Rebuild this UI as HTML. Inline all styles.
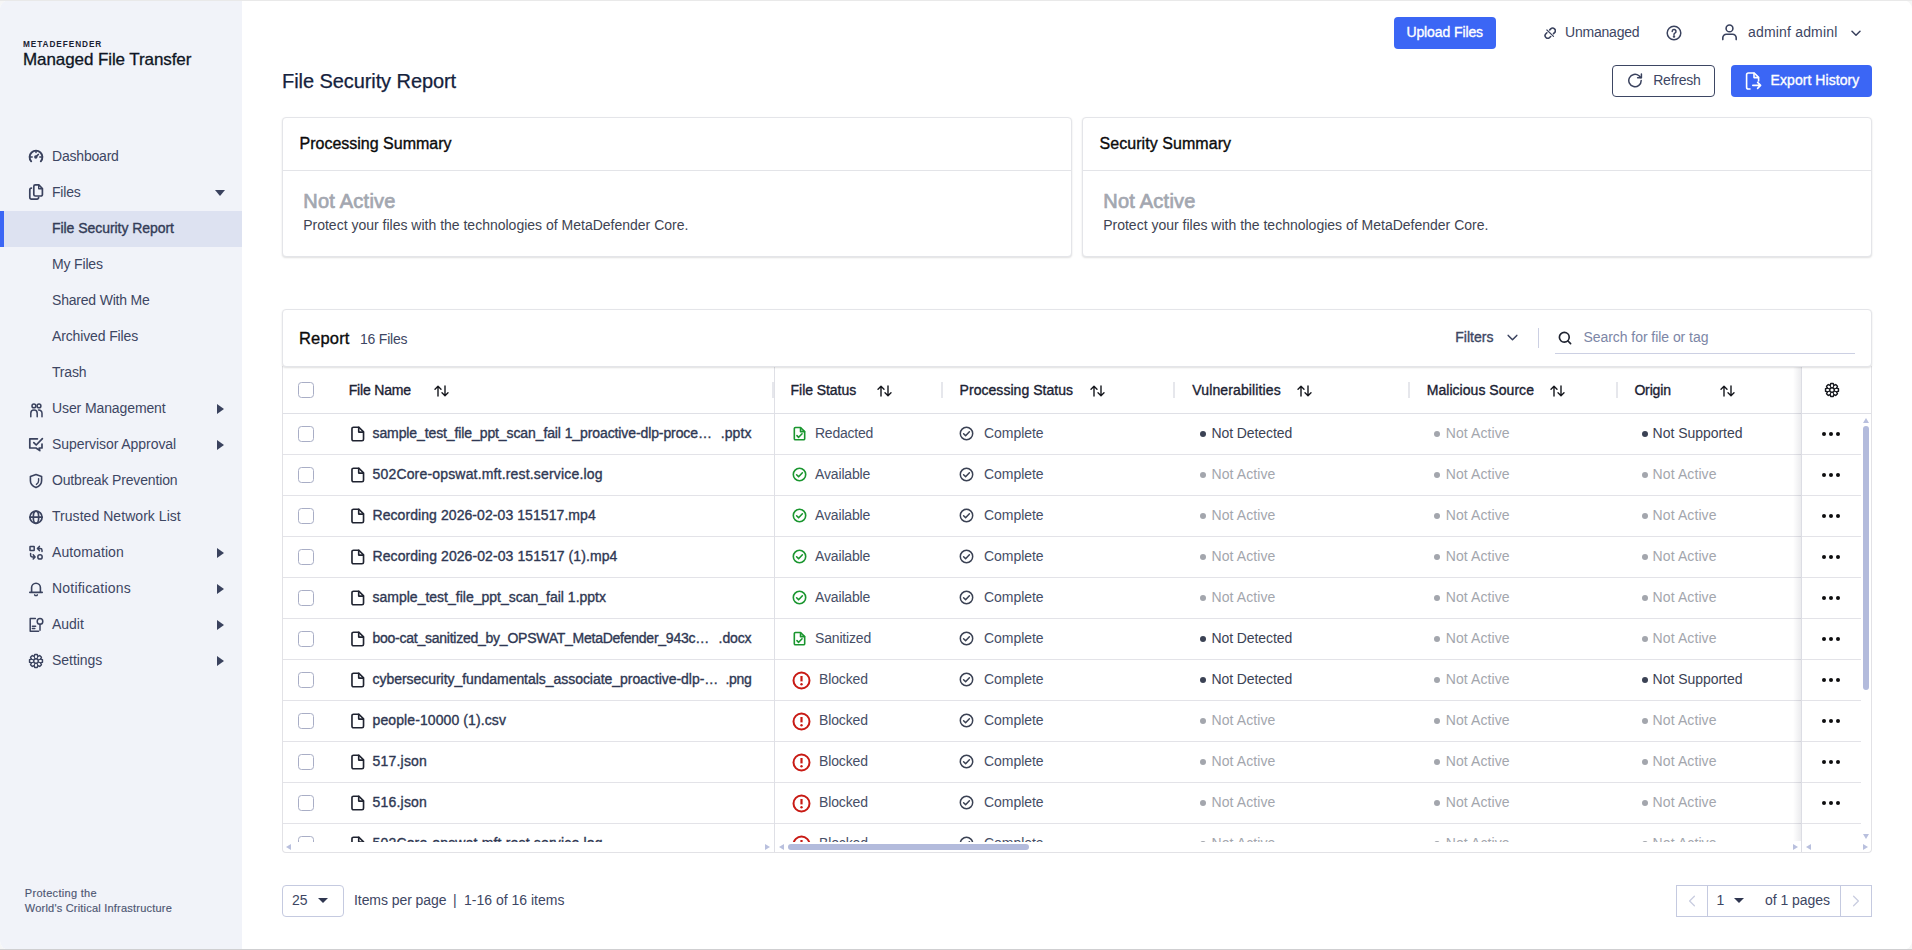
<!DOCTYPE html>
<html lang="en"><head>
<meta charset="utf-8">
<title>File Security Report - MetaDefender Managed File Transfer</title>
<style>
*{box-sizing:border-box;margin:0;padding:0}
html,body{width:1912px;height:950px;overflow:hidden;background:#f6f6f6}
body{font-family:"Liberation Sans",sans-serif;font-size:14px;color:#3d4663;position:relative}
.abs{position:absolute}
.t{position:absolute;white-space:nowrap;line-height:20px}
.med{-webkit-text-stroke:.35px currentColor}
#win{position:absolute;left:0;top:0;width:1912px;height:950px;border-radius:9px;overflow:hidden;background:#fff}
#topline{position:absolute;left:0;top:0;width:1912px;height:1px;background:#e9e9e9;z-index:50}
#botline{position:absolute;left:0;top:949px;width:1912px;height:1px;background:#cfcfd1;z-index:50}
#side{position:absolute;left:0;top:0;width:242px;height:950px;background:#f1f3f9}
/* ===== sidebar ===== */
.brand1{left:23.4px;top:34px;font-size:9.8px;font-weight:700;letter-spacing:1.05px;color:#1b2233;transform:scaleX(.84);transform-origin:0 0}
.brand2{left:23px;top:50px;font-size:17px;color:#0e1524;-webkit-text-stroke:.3px #0e1524}
.mi{position:absolute;left:0;width:242px;height:36px}
.mi .lbl{position:absolute;left:52px;top:8px;line-height:20px;font-size:14px;white-space:nowrap;color:#3d4663}
.mi svg.ic{position:absolute;left:28px;top:10px;width:16px;height:16px;overflow:visible}
.mi .ar{position:absolute;left:217px;top:14px;width:0;height:0;border-left:7px solid #3a425e;border-top:5px solid transparent;border-bottom:5px solid transparent}
.mi .ad{position:absolute;left:215px;top:16px;width:0;height:0;border-top:6px solid #3a425e;border-left:5px solid transparent;border-right:5px solid transparent}
.mi.act{background:#dde2f1}
.mi.act .lbl{top:7px}
.mi.act:before{content:"";position:absolute;left:0;top:0;width:4px;height:36px;background:#3b66f5}
.mi.act .lbl{color:#333c57}
.foot{left:24.8px;font-size:11px;color:#4d5672;line-height:15px;-webkit-text-stroke:.15px #4d5672}
/* ===== main ===== */
#main{position:absolute;left:0;top:0;width:1912px;height:950px}
.btn-blue{background:#3b66f5;border-radius:4px}
.btn-out{border:1px solid #3d4663;border-radius:4px;background:#fff}
.card{background:#fff;border:1px solid #e4e5e9;border-radius:4px;box-shadow:0 1px 2px rgba(0,0,0,.13)}
.na-h{font-size:20px;line-height:26px;color:#a3a7b0;-webkit-text-stroke:.7px #a3a7b0}
#tbl{border:1px solid #e2e2e6;border-top:none;border-radius:0 0 4px 4px;background:#fff}
.th{top:13px;color:#1b2233}
.cb{position:absolute;left:298px;top:12px;width:16px;height:16px;border:1px solid #a9aec6;border-radius:3.5px;background:#fff}
.hs{position:absolute;top:15px;width:2px;height:16px;background:#e6e7ec}
svg.so{position:absolute;top:18px;width:15px;height:12px;overflow:visible}
.tr{position:absolute;left:0;width:1912px;height:41px}
.tr:after{content:"";position:absolute;left:283px;top:40px;width:1578px;height:1px;background:#e3e3e8}
.tr .fi{position:absolute;left:350.5px;top:12px;width:13.5px;height:16px;overflow:visible}
.tr .fn{position:absolute;left:372.5px;top:9px;line-height:20px;white-space:nowrap;color:#2f3853}
.tr .fx{position:absolute;right:1160.5px;top:9px;line-height:20px;white-space:nowrap;color:#2f3853}
.c{position:absolute;top:0;height:40px}
.c1{left:775px}.c2{left:943px}.c3{left:1175px}.c4{left:1410px}.c5{left:1618px}.c6{left:1802px;width:59px;background:#fff}
.c .si{position:absolute;overflow:visible;margin-top:-1px}
.c .tx{position:absolute;top:9px;line-height:20px;white-space:nowrap;color:#464e66}
.c .dot{position:absolute;top:17px;width:6px;height:6px;border-radius:50%;background:#3b4254}
.c.gy .dot{background:#a3a6ad}
.c.gy .tx{color:#a3a6ad}
.c.dk .tx{color:#3b4254}
.d3{position:absolute;left:20px;top:18px;width:4px;height:4px;border-radius:50%;background:#0d0d0f;box-shadow:7px 0 0 #0d0d0f,14px 0 0 #0d0d0f}
#rshadow{background:linear-gradient(to right,rgba(60,64,90,0),rgba(60,64,90,.10))}
.thumb{background:#b3bbdc;border-radius:3px}
.tri{position:absolute;width:0;height:0}
.tri.up{border-left:3.5px solid transparent;border-right:3.5px solid transparent;border-bottom:5px solid #b9c0de}
.tri.dn{border-left:3.5px solid transparent;border-right:3.5px solid transparent;border-top:5px solid #b9c0de}
.tri.lf{border-top:3.5px solid transparent;border-bottom:3.5px solid transparent;border-right:5px solid #b9c0de}
.tri.rt{border-top:3.5px solid transparent;border-bottom:3.5px solid transparent;border-left:5px solid #b9c0de}
.pbox{border:1px solid #c5cae0;border-radius:4px;background:#fff}
.dd{position:absolute;width:0;height:0;border-left:5px solid transparent;border-right:5px solid transparent;border-top:5px solid #2f3650}
</style>
</head>
<body>
<div id="win">
<div id="side">
  <div class="t brand1" style="letter-spacing: 1.113px;">METADEFENDER</div>
  <div class="t brand2" style="letter-spacing: -0.085px;">Managed File Transfer</div>
  <div class="mi" style="top:138px"><svg class="ic" viewBox="0 0 16 16" fill="none" stroke="#3a425e" stroke-width="1.9" stroke-linecap="round" stroke-linejoin="round"><path d="M3.2 13.300A6.4 6.4 0 1 1 12.8 13.3"></path><circle cx="7.8" cy="9" r="1.7" fill="#3a425e" stroke="none"></circle><path d="M8.4 8.400L10.3 6.5" stroke-width="1.7"></path><path d="M8 3.200v1.200M2.4 9h1.800M11.8 9h1.8" stroke-width="1.5"></path></svg><span class="lbl" style="letter-spacing: -0.2px;">Dashboard</span></div>
  <div class="mi" style="top:174px"><svg class="ic" viewBox="0 0 16 16" fill="none" stroke="#3a425e" stroke-width="1.7" stroke-linecap="round" stroke-linejoin="round"><path d="M7.3 .9h3.500L14.4 4.500v6a1.5 1.5 0 0 1-1.5 1.500H7.300a1.5 1.5 0 0 1-1.5-1.500V2.400A1.5 1.5 0 0 1 7.3 .9z"></path><path d="M10.7 1.200v3.500h3.5" stroke-width="1.4"></path><path d="M3.4 4.100H3.300a1.5 1.5 0 0 0-1.5 1.500v8a1.5 1.5 0 0 0 1.5 1.500h5.800a1.5 1.5 0 0 0 1.5-1.500v-.3"></path></svg><span class="lbl" style="letter-spacing: -0.194px;">Files</span><i class="ad"></i></div>
  <div class="mi act" style="top:211px"><span class="lbl med" style="letter-spacing: -0.052px;">File Security Report</span></div>
  <div class="mi" style="top:246px"><span class="lbl" style="letter-spacing: -0.166px;">My Files</span></div>
  <div class="mi" style="top:282px"><span class="lbl" style="letter-spacing: -0.199px;">Shared With Me</span></div>
  <div class="mi" style="top:318px"><span class="lbl" style="letter-spacing: -0.137px;">Archived Files</span></div>
  <div class="mi" style="top:354px"><span class="lbl" style="letter-spacing: -0.195px;">Trash</span></div>
  <div class="mi" style="top:390px"><svg class="ic" style="top:11px" viewBox="0 0 16 16" fill="none" stroke="#3a425e" stroke-linecap="round" stroke-linejoin="round" stroke-width="1.5"><circle cx="5.9" cy="4.9" r="1.9"></circle><circle cx="11" cy="4.9" r="1.9"></circle><path d="M2.8 15.800v-3.600a3.2 3.2 0 0 1 6.4 0v3.6"></path><path d="M10.6 9a3.2 3.2 0 0 1 3.4 3.200v3.6"></path></svg><span class="lbl" style="letter-spacing: -0.105px;">User Management</span><i class="ar"></i></div>
  <div class="mi" style="top:426px"><svg class="ic" viewBox="0 0 16 16" fill="none" stroke="#3a425e" stroke-linecap="round" stroke-linejoin="round" stroke-width="1.7"><path d="M14 8v4H11.200l.6 2.600L8 12H1.800V2.800h7.6"></path><path d="M5.8 6.600l2.4 2.400L14.4 2.6"></path></svg><span class="lbl" style="letter-spacing: -0.063px;">Supervisor Approval</span><i class="ar"></i></div>
  <div class="mi" style="top:462px"><svg class="ic" style="top:11px" viewBox="0 0 16 16" fill="none" stroke="#3a425e" stroke-linecap="round" stroke-linejoin="round" stroke-width="1.6"><path d="M8 1.600l5.6 2v4.200c0 3.4-2.4 5.6-5.6 6.800C4.8 13.4 2.4 11.2 2.4 7.800V3.600z"></path><path d="M10.6 5.600v2.200c0 1.6-.8 2.8-2.2 3.6" stroke-width="1.4"></path></svg><span class="lbl" style="letter-spacing: -0.158px;">Outbreak Prevention</span></div>
  <div class="mi" style="top:498px"><svg class="ic" style="top:11px" viewBox="0 0 16 16" fill="none" stroke="#3a425e" stroke-linecap="round" stroke-linejoin="round" stroke-width="1.7"><circle cx="8" cy="8.2" r="6.1"></circle><path d="M2 8.200h12"></path><ellipse cx="8" cy="8.2" rx="2.7" ry="6.1"></ellipse></svg><span class="lbl" style="letter-spacing: 0.047px;">Trusted Network List</span></div>
  <div class="mi" style="top:534px"><svg class="ic" style="top:11px" viewBox="0 0 16 16" fill="none" stroke="#3a425e" stroke-linecap="round" stroke-linejoin="round" stroke-width="1.5"><rect x="2" y="1.4" width="4.2" height="4.2" rx=".3"></rect><circle cx="12" cy="11.9" r="2.2"></circle><path d="M2.6 8.400v1.800a1.7 1.7 0 0 0 1.7 1.700h2.500M5.2 9.800l1.9 2.1-1.9 2.1"></path><path d="M14 6.400V5.200a1.7 1.7 0 0 0-1.7-1.700H9.800M11.4 1.400L9.4 3.500l2 2.1"></path></svg><span class="lbl" style="letter-spacing: 0.107px;">Automation</span><i class="ar"></i></div>
  <div class="mi" style="top:570px"><svg class="ic" viewBox="0 0 16 16" fill="none" stroke="#3a425e" stroke-linecap="round" stroke-linejoin="round" stroke-width="1.6"><path d="M3.6 12.200V7.600a4.4 4.4 0 0 1 8.8 0v4.6"></path><path d="M1.8 12.400h12.4"></path><path d="M6.6 14.800a1.6 1.6 0 0 0 2.8 0" stroke-width="1.4"></path></svg><span class="lbl" style="letter-spacing: 0.21px;">Notifications</span><i class="ar"></i></div>
  <div class="mi" style="top:606px"><svg class="ic" style="top:11px" viewBox="0 0 16 16" fill="none" stroke="#3a425e" stroke-linecap="round" stroke-linejoin="round" stroke-width="1.5"><path d="M7.4 1.600H2.200v12.600h8.4"></path><circle cx="12" cy="4.4" r="2.8"></circle><path d="M12 7.200v6M4.4 9.200h3.200M4.4 11.600h2.4"></path></svg><span class="lbl" style="letter-spacing: -0.023px;">Audit</span><i class="ar"></i></div>
  <div class="mi" style="top:642px"><svg class="ic" style="top:11px" viewBox="0 0 16 16" fill="none" stroke="#3a425e" stroke-width="1.4" stroke-linecap="round" stroke-linejoin="round"><circle cx="8" cy="8" r="2.3"></circle><path d="M6.12 3.47L6.74 1.52L9.26 1.52L9.88 3.47L11.69 2.53L13.47 4.31L12.53 6.12L14.48 6.74L14.48 9.26L12.53 9.88L13.47 11.69L11.69 13.47L9.88 12.53L9.26 14.48L6.74 14.48L6.12 12.53L4.31 13.47L2.53 11.69L3.47 9.88L1.52 9.26L1.52 6.74L3.47 6.12L2.53 4.31L4.31 2.53z"></path><path d="M8.99 5.60L9.80 3.66M10.40 7.01L12.34 6.20M10.40 8.99L12.34 9.80M8.99 10.40L9.80 12.34M7.01 10.40L6.20 12.34M5.60 8.99L3.66 9.80M5.60 7.01L3.66 6.20M7.01 5.60L6.20 3.66" stroke-width="1.1"></path></svg><span class="lbl" style="letter-spacing: -0.037px;">Settings</span><i class="ar"></i></div>
  <div class="t foot" style="top: 886px; letter-spacing: 0.301px;">Protecting the</div>
  <div class="t foot" style="top: 901px; letter-spacing: 0.211px;">World's Critical Infrastructure</div>
</div>
<div id="main">
  <!-- top bar -->
  <div class="abs btn-blue" style="left:1394px;top:17px;width:102px;height:32px"><span class="t med" style="left: 12.4px; top: 5px; color: rgb(255, 255, 255); letter-spacing: -0.102px;" id="t-upload">Upload Files</span></div>
  <svg class="abs" style="left:1543.9px;top:26.8px;width:12.6px;height:12.6px" viewBox="0 0 14 14" fill="none" stroke="#3a425e" stroke-width="1.75" stroke-linecap="round" stroke-linejoin="round"><path d="M6.400 3.200L7.500 2.100A2.970 2.970 0 0 1 11.700 6.300L10.600 7.400"></path><path d="M7.400 10.600L6.300 11.700A2.970 2.970 0 0 1 2.100 7.500L3.200 6.400"></path><path d="M3.200 3.300L10.600 10.400" stroke-width="1.300"></path></svg>
  <span class="t" style="left: 1565px; top: 22px; letter-spacing: -0.209px;" id="t-unman">Unmanaged</span>
  <svg class="abs" style="left:1666px;top:25px;width:16px;height:16px" viewBox="0 0 16 16" fill="none" stroke="#3a425e" stroke-width="1.500" stroke-linecap="round" stroke-linejoin="round"><circle cx="8" cy="8" r="6.800"></circle><path d="M6.200 6.400a1.900 1.900 0 1 1 2.700 1.700c-.6.300-.9.700-.9 1.300"></path><circle cx="8" cy="11.400" r=".5" fill="#3a425e"></circle></svg>
  <svg class="abs" style="left:1721px;top:23px;width:17px;height:18px" viewBox="0 0 17 18" fill="none" stroke="#3a425e" stroke-width="1.600" stroke-linecap="round" stroke-linejoin="round"><circle cx="8.500" cy="5.400" r="3.400"></circle><path d="M1.800 16.600v-1.800a3.600 3.600 0 0 1 3.600-3.600h6.200a3.600 3.600 0 0 1 3.600 3.600v1.800"></path></svg>
  <span class="t" style="left: 1748px; top: 22px; letter-spacing: 0.18px;" id="t-user">adminf adminl</span>
  <svg class="abs" style="left:1851px;top:29.7px;width:10px;height:7px" viewBox="0 0 10 7" fill="none" stroke="#3a425e" stroke-width="1.500" stroke-linecap="round" stroke-linejoin="round"><path d="M1 1.200l4 4 4-4"></path></svg>

  <!-- title row -->
  <span class="t" style="left: 282px; top: 67px; font-size: 20px; line-height: 28px; color: rgb(21, 34, 61); -webkit-text-stroke: 0.25px rgb(21, 34, 61); letter-spacing: -0.076px;" id="t-title">File Security Report</span>
  <div class="abs btn-out" style="left:1612px;top:65px;width:103px;height:32px">
    <svg class="abs" style="left:14px;top:7px;width:16px;height:15px" viewBox="0 0 16 15" fill="none" stroke="#3a425e" stroke-width="1.500" stroke-linecap="round" stroke-linejoin="round"><path d="M14.200 7.500A6.200 6.200 0 1 1 12 2.800l2 1.800"></path><path d="M14.400 1v3.800h-3.800"></path></svg>
    <span class="t" style="left: 40.2px; top: 4px; letter-spacing: -0.219px;" id="t-refresh">Refresh</span>
  </div>
  <div class="abs btn-blue" style="left:1731px;top:65px;width:141px;height:32px">
    <svg class="abs" style="left:14px;top:7px;width:17px;height:18px" viewBox="0 0 17 18" fill="none" stroke="#fff" stroke-width="1.600" stroke-linecap="round" stroke-linejoin="round"><path d="M5 17H3.400A1.800 1.800 0 0 1 1.600 15.200V2.800A1.800 1.800 0 0 1 3.400 1h5.800l4.400 4.400V9"></path><path d="M9 1.200v4.400h4.400"></path><path d="M7.800 13.400h7.600M12.600 10.400l3 3-3 3"></path></svg>
    <span class="t med" style="left: 39.6px; top: 5px; color: rgb(255, 255, 255); letter-spacing: 0.056px;" id="t-export">Export History</span>
  </div>

  <!-- summary cards -->
  <div class="abs card" style="left:282px;top:117px;width:790px;height:140px">
    <span class="t med" style="left: 16.5px; top: 15px; font-size: 16px; line-height: 22px; color: rgb(11, 11, 12);" id="t-ps">Processing Summary</span>
    <div class="abs" style="left:0;top:52px;width:788px;height:1px;background:#e3e4e8"></div>
    <span class="t na-h" style="left: 20.2px; top: 70px; letter-spacing: 0.245px;" id="t-na1">Not Active</span>
    <span class="t" style="left: 20.2px; top: 97px; color: rgb(62, 68, 82);" id="t-pr1">Protect your files with the technologies of MetaDefender Core.</span>
  </div>
  <div class="abs card" style="left:1082px;top:117px;width:790px;height:140px">
    <span class="t med" style="left: 16.5px; top: 15px; font-size: 16px; line-height: 22px; color: rgb(11, 11, 12); letter-spacing: 0.056px;" id="t-ss">Security Summary</span>
    <div class="abs" style="left:0;top:52px;width:788px;height:1px;background:#e3e4e8"></div>
    <span class="t na-h" style="left: 20.2px; top: 70px; letter-spacing: 0.245px;" id="t-na2">Not Active</span>
    <span class="t" style="left: 20.2px; top: 97px; color: rgb(62, 68, 82);" id="t-pr2">Protect your files with the technologies of MetaDefender Core.</span>
  </div>

  <!-- report header card -->
  <div class="abs card" style="left:282px;top:309px;width:1590px;height:58px;z-index:3">
    <span class="t med" style="left: 16px; top: 17px; font-size: 16.5px; line-height: 22px; color: rgb(11, 11, 12); letter-spacing: 0.179px;" id="t-rep">Report</span>
    <span class="t" style="left: 77px; top: 19px; color: rgb(61, 70, 99); letter-spacing: -0.204px;" id="t-16f">16 Files</span>
    <span class="t med" style="left: 1172.2px; top: 17px; color: rgb(61, 70, 99); letter-spacing: 0.025px;" id="t-filt">Filters</span>
    <svg class="abs" style="left:1224.2px;top:24px;width:11px;height:8px" viewBox="0 0 11 8" fill="none" stroke="#3a425e" stroke-width="1.500" stroke-linecap="round" stroke-linejoin="round"><path d="M1.200 1.400l4.300 4.400 4.300-4.400"></path></svg>
    <div class="abs" style="left:1255px;top:18px;width:1px;height:20px;background:#ccd0e3"></div>
    <svg class="abs" style="left:1274.7px;top:21px;width:14px;height:14px" viewBox="0 0 16 16" fill="none" stroke="#1f2330" stroke-width="1.900" stroke-linecap="round"><circle cx="7.200" cy="7.200" r="5.600"></circle><path d="M11.400 11.400l3 3"></path></svg>
    <span class="t" style="left: 1300.4px; top: 17px; color: rgb(124, 134, 166); letter-spacing: -0.048px;" id="t-search">Search for file or tag</span>
    <div class="abs" style="left:1272px;top:43px;width:300px;height:1px;background:#ccd0e3"></div>
  </div>
  <!-- table -->
  <div class="abs" id="tbl" style="left:282px;top:366px;width:1590px;height:487px"></div>
  <div class="abs" id="thead" style="left:0;top:367px;width:1912px;height:46px">
    <i class="cb" style="top:15px"></i>
    <span class="t th med" style="left: 348.7px; letter-spacing: -0.167px;" id="th-fn">File Name</span><svg class="so" style="left:433.5px" viewBox="0 0 15 12"><g fill="none" stroke="#15171d" stroke-width="1.4" stroke-linecap="round" stroke-linejoin="round"><path d="M4 11V1.400M1 4.200l3-3 3 3"></path><path d="M11 1v9.600M8 7.800l3 3 3-3"></path></g></svg>
    <i class="hs" style="left:772px"></i>
    <span class="t th med" style="left: 790.6px; letter-spacing: -0.058px;" id="th-fs">File Status</span><svg class="so" style="left:876.7px" viewBox="0 0 15 12"><g fill="none" stroke="#15171d" stroke-width="1.4" stroke-linecap="round" stroke-linejoin="round"><path d="M4 11V1.400M1 4.200l3-3 3 3"></path><path d="M11 1v9.600M8 7.800l3 3 3-3"></path></g></svg>
    <i class="hs" style="left:941px"></i>
    <span class="t th med" style="left: 959.6px; letter-spacing: 0.039px;" id="th-ps">Processing Status</span><svg class="so" style="left:1089.7px" viewBox="0 0 15 12"><g fill="none" stroke="#15171d" stroke-width="1.4" stroke-linecap="round" stroke-linejoin="round"><path d="M4 11V1.400M1 4.200l3-3 3 3"></path><path d="M11 1v9.600M8 7.800l3 3 3-3"></path></g></svg>
    <i class="hs" style="left:1173px"></i>
    <span class="t th med" style="left: 1192.3px; letter-spacing: 0.124px;" id="th-vu">Vulnerabilities</span><svg class="so" style="left:1296.6px" viewBox="0 0 15 12"><g fill="none" stroke="#15171d" stroke-width="1.4" stroke-linecap="round" stroke-linejoin="round"><path d="M4 11V1.400M1 4.200l3-3 3 3"></path><path d="M11 1v9.600M8 7.800l3 3 3-3"></path></g></svg>
    <i class="hs" style="left:1408px"></i>
    <span class="t th med" style="left: 1426.7px; letter-spacing: 0.043px;" id="th-ms">Malicious Source</span><svg class="so" style="left:1549.9px" viewBox="0 0 15 12"><g fill="none" stroke="#15171d" stroke-width="1.4" stroke-linecap="round" stroke-linejoin="round"><path d="M4 11V1.400M1 4.200l3-3 3 3"></path><path d="M11 1v9.600M8 7.800l3 3 3-3"></path></g></svg>
    <i class="hs" style="left:1616px"></i>
    <span class="t th med" style="left: 1634.4px; letter-spacing: -0.158px;" id="th-or">Origin</span><svg class="so" style="left:1719.7px" viewBox="0 0 15 12"><g fill="none" stroke="#15171d" stroke-width="1.4" stroke-linecap="round" stroke-linejoin="round"><path d="M4 11V1.400M1 4.200l3-3 3 3"></path><path d="M11 1v9.600M8 7.800l3 3 3-3"></path></g></svg>
  </div>
  <div class="abs" style="left:283px;top:413px;width:1588px;height:1px;background:#dfe0e6"></div>
  <div class="abs" id="tbody" style="left:0;top:414px;width:1912px;height:428px;overflow:hidden">
<div class="tr" style="top:0px"><i class="cb"></i><svg class="fi" viewBox="0 0 14 16" fill="none" stroke="#1f2330" stroke-width="1.7" stroke-linejoin="round" stroke-linecap="round"><path d="M2.600 1h5.600l4.800 4.800v7.600a1.600 1.600 0 0 1-1.600 1.600H2.600A1.600 1.600 0 0 1 1 13.400V2.600A1.600 1.600 0 0 1 2.600 1z"></path><path d="M8 1.200v4.800h4.800"></path></svg><span class="fn med" style="letter-spacing: -0.103px;">sample_test_file_ppt_scan_fail 1_proactive-dlp-proce…</span><span class="fx med" style="letter-spacing: 0.067px;">.pptx</span><div class="c c1"><svg class="si" style="left:17.5px;top:13.1px;width:13.2px;height:15.1px" viewBox="0 0 14 16" fill="none" stroke="#1a962f" stroke-width="1.7" stroke-linejoin="round" stroke-linecap="round"><path d="M2.600 1.600h5.400l4.400 4.400v7.400a1.200 1.200 0 0 1-1.200 1.200H2.600a1.200 1.200 0 0 1-1.200-1.200V2.800a1.200 1.200 0 0 1 1.200-1.200z"></path><path d="M8 1.800v4.200h4.200"></path><path d="M4.200 10.200l1.800 1.800 3.600-3.800"></path></svg><span class="tx" style="left: 40px; letter-spacing: -0.242px;">Redacted</span></div><div class="c c2"><svg class="si" style="left:16.4px;top:13.3px;width:15px;height:15px" viewBox="0 0 15 15" fill="none" stroke="#3b4254" stroke-width="1.500" stroke-linejoin="round" stroke-linecap="round"><circle cx="7.500" cy="7.500" r="6.200"></circle><path d="M4.600 7.800l2 2 3.800-4"></path></svg><span class="tx" style="left: 41px; letter-spacing: -0.053px;">Complete</span></div><div class="c c3 dk"><i class="dot" style="left:25px"></i><span class="tx" style="left: 36.5px; letter-spacing: -0.093px;">Not Detected</span></div><div class="c c4 gy"><i class="dot" style="left:24px"></i><span class="tx" style="left: 35.7px; letter-spacing: 0.097px;">Not Active</span></div><div class="c c5 dk"><i class="dot" style="left:24px"></i><span class="tx" style="left: 34.6px; letter-spacing: -0.03px;">Not Supported</span></div><div class="c c6"><i class="d3"></i></div></div>
<div class="tr" style="top:41px"><i class="cb"></i><svg class="fi" viewBox="0 0 14 16" fill="none" stroke="#1f2330" stroke-width="1.7" stroke-linejoin="round" stroke-linecap="round"><path d="M2.600 1h5.600l4.800 4.800v7.600a1.600 1.600 0 0 1-1.600 1.600H2.600A1.600 1.600 0 0 1 1 13.400V2.600A1.600 1.600 0 0 1 2.600 1z"></path><path d="M8 1.200v4.800h4.800"></path></svg><span class="fn med" style="letter-spacing: 0.174px;">502Core-opswat.mft.rest.service.log</span><div class="c c1"><svg class="si" style="left:16.5px;top:13.2px;width:15px;height:15px" viewBox="0 0 15 15" fill="none" stroke="#1a962f" stroke-width="1.6" stroke-linejoin="round" stroke-linecap="round"><circle cx="7.500" cy="7.500" r="6.200"></circle><path d="M4.600 7.800l2 2 3.800-4"></path></svg><span class="tx" style="left: 40px; letter-spacing: -0.151px;">Available</span></div><div class="c c2"><svg class="si" style="left:16.4px;top:13.3px;width:15px;height:15px" viewBox="0 0 15 15" fill="none" stroke="#3b4254" stroke-width="1.500" stroke-linejoin="round" stroke-linecap="round"><circle cx="7.500" cy="7.500" r="6.200"></circle><path d="M4.600 7.800l2 2 3.800-4"></path></svg><span class="tx" style="left: 41px; letter-spacing: -0.053px;">Complete</span></div><div class="c c3 gy"><i class="dot" style="left:25px"></i><span class="tx" style="left: 36.5px; letter-spacing: 0.097px;">Not Active</span></div><div class="c c4 gy"><i class="dot" style="left:24px"></i><span class="tx" style="left: 35.7px; letter-spacing: 0.097px;">Not Active</span></div><div class="c c5 gy"><i class="dot" style="left:24px"></i><span class="tx" style="left: 34.6px; letter-spacing: 0.097px;">Not Active</span></div><div class="c c6"><i class="d3"></i></div></div>
<div class="tr" style="top:82px"><i class="cb"></i><svg class="fi" viewBox="0 0 14 16" fill="none" stroke="#1f2330" stroke-width="1.7" stroke-linejoin="round" stroke-linecap="round"><path d="M2.600 1h5.600l4.800 4.800v7.600a1.600 1.600 0 0 1-1.600 1.600H2.600A1.600 1.600 0 0 1 1 13.400V2.600A1.600 1.600 0 0 1 2.600 1z"></path><path d="M8 1.200v4.800h4.800"></path></svg><span class="fn med" style="letter-spacing: 0.073px;">Recording 2026-02-03 151517.mp4</span><div class="c c1"><svg class="si" style="left:16.5px;top:13.2px;width:15px;height:15px" viewBox="0 0 15 15" fill="none" stroke="#1a962f" stroke-width="1.6" stroke-linejoin="round" stroke-linecap="round"><circle cx="7.500" cy="7.500" r="6.200"></circle><path d="M4.600 7.800l2 2 3.800-4"></path></svg><span class="tx" style="left: 40px; letter-spacing: -0.151px;">Available</span></div><div class="c c2"><svg class="si" style="left:16.4px;top:13.3px;width:15px;height:15px" viewBox="0 0 15 15" fill="none" stroke="#3b4254" stroke-width="1.500" stroke-linejoin="round" stroke-linecap="round"><circle cx="7.500" cy="7.500" r="6.200"></circle><path d="M4.600 7.800l2 2 3.800-4"></path></svg><span class="tx" style="left: 41px; letter-spacing: -0.053px;">Complete</span></div><div class="c c3 gy"><i class="dot" style="left:25px"></i><span class="tx" style="left: 36.5px; letter-spacing: 0.097px;">Not Active</span></div><div class="c c4 gy"><i class="dot" style="left:24px"></i><span class="tx" style="left: 35.7px; letter-spacing: 0.097px;">Not Active</span></div><div class="c c5 gy"><i class="dot" style="left:24px"></i><span class="tx" style="left: 34.6px; letter-spacing: 0.097px;">Not Active</span></div><div class="c c6"><i class="d3"></i></div></div>
<div class="tr" style="top:123px"><i class="cb"></i><svg class="fi" viewBox="0 0 14 16" fill="none" stroke="#1f2330" stroke-width="1.7" stroke-linejoin="round" stroke-linecap="round"><path d="M2.600 1h5.600l4.800 4.800v7.600a1.600 1.600 0 0 1-1.600 1.600H2.600A1.600 1.600 0 0 1 1 13.400V2.600A1.600 1.600 0 0 1 2.600 1z"></path><path d="M8 1.200v4.800h4.800"></path></svg><span class="fn med" style="letter-spacing: 0.081px;">Recording 2026-02-03 151517 (1).mp4</span><div class="c c1"><svg class="si" style="left:16.5px;top:13.2px;width:15px;height:15px" viewBox="0 0 15 15" fill="none" stroke="#1a962f" stroke-width="1.6" stroke-linejoin="round" stroke-linecap="round"><circle cx="7.500" cy="7.500" r="6.200"></circle><path d="M4.600 7.800l2 2 3.800-4"></path></svg><span class="tx" style="left: 40px; letter-spacing: -0.151px;">Available</span></div><div class="c c2"><svg class="si" style="left:16.4px;top:13.3px;width:15px;height:15px" viewBox="0 0 15 15" fill="none" stroke="#3b4254" stroke-width="1.500" stroke-linejoin="round" stroke-linecap="round"><circle cx="7.500" cy="7.500" r="6.200"></circle><path d="M4.600 7.800l2 2 3.800-4"></path></svg><span class="tx" style="left: 41px; letter-spacing: -0.053px;">Complete</span></div><div class="c c3 gy"><i class="dot" style="left:25px"></i><span class="tx" style="left: 36.5px; letter-spacing: 0.097px;">Not Active</span></div><div class="c c4 gy"><i class="dot" style="left:24px"></i><span class="tx" style="left: 35.7px; letter-spacing: 0.097px;">Not Active</span></div><div class="c c5 gy"><i class="dot" style="left:24px"></i><span class="tx" style="left: 34.6px; letter-spacing: 0.097px;">Not Active</span></div><div class="c c6"><i class="d3"></i></div></div>
<div class="tr" style="top:164px"><i class="cb"></i><svg class="fi" viewBox="0 0 14 16" fill="none" stroke="#1f2330" stroke-width="1.7" stroke-linejoin="round" stroke-linecap="round"><path d="M2.600 1h5.600l4.800 4.800v7.600a1.600 1.600 0 0 1-1.600 1.600H2.600A1.600 1.600 0 0 1 1 13.400V2.600A1.600 1.600 0 0 1 2.600 1z"></path><path d="M8 1.200v4.800h4.800"></path></svg><span class="fn med" style="">sample_test_file_ppt_scan_fail 1.pptx</span><div class="c c1"><svg class="si" style="left:16.5px;top:13.2px;width:15px;height:15px" viewBox="0 0 15 15" fill="none" stroke="#1a962f" stroke-width="1.6" stroke-linejoin="round" stroke-linecap="round"><circle cx="7.500" cy="7.500" r="6.200"></circle><path d="M4.600 7.800l2 2 3.800-4"></path></svg><span class="tx" style="left: 40px; letter-spacing: -0.151px;">Available</span></div><div class="c c2"><svg class="si" style="left:16.4px;top:13.3px;width:15px;height:15px" viewBox="0 0 15 15" fill="none" stroke="#3b4254" stroke-width="1.500" stroke-linejoin="round" stroke-linecap="round"><circle cx="7.500" cy="7.500" r="6.200"></circle><path d="M4.600 7.800l2 2 3.800-4"></path></svg><span class="tx" style="left: 41px; letter-spacing: -0.053px;">Complete</span></div><div class="c c3 gy"><i class="dot" style="left:25px"></i><span class="tx" style="left: 36.5px; letter-spacing: 0.097px;">Not Active</span></div><div class="c c4 gy"><i class="dot" style="left:24px"></i><span class="tx" style="left: 35.7px; letter-spacing: 0.097px;">Not Active</span></div><div class="c c5 gy"><i class="dot" style="left:24px"></i><span class="tx" style="left: 34.6px; letter-spacing: 0.097px;">Not Active</span></div><div class="c c6"><i class="d3"></i></div></div>
<div class="tr" style="top:205px"><i class="cb"></i><svg class="fi" viewBox="0 0 14 16" fill="none" stroke="#1f2330" stroke-width="1.7" stroke-linejoin="round" stroke-linecap="round"><path d="M2.600 1h5.600l4.800 4.800v7.600a1.600 1.600 0 0 1-1.600 1.600H2.600A1.600 1.600 0 0 1 1 13.400V2.600A1.600 1.600 0 0 1 2.600 1z"></path><path d="M8 1.200v4.800h4.800"></path></svg><span class="fn med" style="letter-spacing: -0.247px;">boo-cat_sanitized_by_OPSWAT_MetaDefender_943c…</span><span class="fx med" style="letter-spacing: -0.115px;">.docx</span><div class="c c1"><svg class="si" style="left:17.5px;top:13.1px;width:13.2px;height:15.1px" viewBox="0 0 14 16" fill="none" stroke="#1a962f" stroke-width="1.7" stroke-linejoin="round" stroke-linecap="round"><path d="M2.600 1.600h5.400l4.400 4.400v7.400a1.200 1.200 0 0 1-1.200 1.200H2.600a1.200 1.200 0 0 1-1.200-1.200V2.800a1.200 1.200 0 0 1 1.200-1.200z"></path><path d="M8 1.800v4.200h4.200"></path><path d="M4.200 10.200l1.800 1.800 3.600-3.800"></path></svg><span class="tx" style="left: 40px; letter-spacing: -0.177px;">Sanitized</span></div><div class="c c2"><svg class="si" style="left:16.4px;top:13.3px;width:15px;height:15px" viewBox="0 0 15 15" fill="none" stroke="#3b4254" stroke-width="1.500" stroke-linejoin="round" stroke-linecap="round"><circle cx="7.500" cy="7.500" r="6.200"></circle><path d="M4.600 7.800l2 2 3.800-4"></path></svg><span class="tx" style="left: 41px; letter-spacing: -0.053px;">Complete</span></div><div class="c c3 dk"><i class="dot" style="left:25px"></i><span class="tx" style="left: 36.5px; letter-spacing: -0.093px;">Not Detected</span></div><div class="c c4 gy"><i class="dot" style="left:24px"></i><span class="tx" style="left: 35.7px; letter-spacing: 0.097px;">Not Active</span></div><div class="c c5 gy"><i class="dot" style="left:24px"></i><span class="tx" style="left: 34.6px; letter-spacing: 0.097px;">Not Active</span></div><div class="c c6"><i class="d3"></i></div></div>
<div class="tr" style="top:246px"><i class="cb"></i><svg class="fi" viewBox="0 0 14 16" fill="none" stroke="#1f2330" stroke-width="1.7" stroke-linejoin="round" stroke-linecap="round"><path d="M2.600 1h5.600l4.800 4.800v7.600a1.600 1.600 0 0 1-1.600 1.600H2.600A1.600 1.600 0 0 1 1 13.400V2.600A1.600 1.600 0 0 1 2.600 1z"></path><path d="M8 1.200v4.800h4.800"></path></svg><span class="fn med" style="letter-spacing: -0.041px;">cybersecurity_fundamentals_associate_proactive-dlp-…</span><span class="fx med" style="letter-spacing: -0.312px;">.png</span><div class="c c1"><svg class="si" style="left:16.5px;top:11.5px;width:19px;height:19px" viewBox="0 0 19 19" fill="none" stroke="#c81a14" stroke-width="2" stroke-linecap="round"><circle cx="9.500" cy="9.500" r="8"></circle><path d="M9.500 5v5.400" stroke-width="2.200" stroke-linecap="butt"></path><circle cx="9.500" cy="13.300" r="1.200" fill="#c81a14" stroke="none"></circle></svg><span class="tx" style="left: 44px; letter-spacing: -0.13px;">Blocked</span></div><div class="c c2"><svg class="si" style="left:16.4px;top:13.3px;width:15px;height:15px" viewBox="0 0 15 15" fill="none" stroke="#3b4254" stroke-width="1.500" stroke-linejoin="round" stroke-linecap="round"><circle cx="7.500" cy="7.500" r="6.200"></circle><path d="M4.600 7.800l2 2 3.800-4"></path></svg><span class="tx" style="left: 41px; letter-spacing: -0.053px;">Complete</span></div><div class="c c3 dk"><i class="dot" style="left:25px"></i><span class="tx" style="left: 36.5px; letter-spacing: -0.093px;">Not Detected</span></div><div class="c c4 gy"><i class="dot" style="left:24px"></i><span class="tx" style="left: 35.7px; letter-spacing: 0.097px;">Not Active</span></div><div class="c c5 dk"><i class="dot" style="left:24px"></i><span class="tx" style="left: 34.6px; letter-spacing: -0.03px;">Not Supported</span></div><div class="c c6"><i class="d3"></i></div></div>
<div class="tr" style="top:287px"><i class="cb"></i><svg class="fi" viewBox="0 0 14 16" fill="none" stroke="#1f2330" stroke-width="1.7" stroke-linejoin="round" stroke-linecap="round"><path d="M2.600 1h5.600l4.800 4.800v7.600a1.600 1.600 0 0 1-1.600 1.600H2.600A1.600 1.600 0 0 1 1 13.400V2.600A1.600 1.600 0 0 1 2.600 1z"></path><path d="M8 1.200v4.800h4.800"></path></svg><span class="fn med" style="letter-spacing: 0.098px;">people-10000 (1).csv</span><div class="c c1"><svg class="si" style="left:16.5px;top:11.5px;width:19px;height:19px" viewBox="0 0 19 19" fill="none" stroke="#c81a14" stroke-width="2" stroke-linecap="round"><circle cx="9.500" cy="9.500" r="8"></circle><path d="M9.500 5v5.400" stroke-width="2.200" stroke-linecap="butt"></path><circle cx="9.500" cy="13.300" r="1.200" fill="#c81a14" stroke="none"></circle></svg><span class="tx" style="left: 44px; letter-spacing: -0.13px;">Blocked</span></div><div class="c c2"><svg class="si" style="left:16.4px;top:13.3px;width:15px;height:15px" viewBox="0 0 15 15" fill="none" stroke="#3b4254" stroke-width="1.500" stroke-linejoin="round" stroke-linecap="round"><circle cx="7.500" cy="7.500" r="6.200"></circle><path d="M4.600 7.800l2 2 3.800-4"></path></svg><span class="tx" style="left: 41px; letter-spacing: -0.053px;">Complete</span></div><div class="c c3 gy"><i class="dot" style="left:25px"></i><span class="tx" style="left: 36.5px; letter-spacing: 0.097px;">Not Active</span></div><div class="c c4 gy"><i class="dot" style="left:24px"></i><span class="tx" style="left: 35.7px; letter-spacing: 0.097px;">Not Active</span></div><div class="c c5 gy"><i class="dot" style="left:24px"></i><span class="tx" style="left: 34.6px; letter-spacing: 0.097px;">Not Active</span></div><div class="c c6"><i class="d3"></i></div></div>
<div class="tr" style="top:328px"><i class="cb"></i><svg class="fi" viewBox="0 0 14 16" fill="none" stroke="#1f2330" stroke-width="1.7" stroke-linejoin="round" stroke-linecap="round"><path d="M2.600 1h5.600l4.800 4.800v7.600a1.600 1.600 0 0 1-1.600 1.600H2.600A1.600 1.600 0 0 1 1 13.400V2.600A1.600 1.600 0 0 1 2.600 1z"></path><path d="M8 1.200v4.800h4.800"></path></svg><span class="fn med" style="letter-spacing: 0.208px;">517.json</span><div class="c c1"><svg class="si" style="left:16.5px;top:11.5px;width:19px;height:19px" viewBox="0 0 19 19" fill="none" stroke="#c81a14" stroke-width="2" stroke-linecap="round"><circle cx="9.500" cy="9.500" r="8"></circle><path d="M9.500 5v5.400" stroke-width="2.200" stroke-linecap="butt"></path><circle cx="9.500" cy="13.300" r="1.200" fill="#c81a14" stroke="none"></circle></svg><span class="tx" style="left: 44px; letter-spacing: -0.13px;">Blocked</span></div><div class="c c2"><svg class="si" style="left:16.4px;top:13.3px;width:15px;height:15px" viewBox="0 0 15 15" fill="none" stroke="#3b4254" stroke-width="1.500" stroke-linejoin="round" stroke-linecap="round"><circle cx="7.500" cy="7.500" r="6.200"></circle><path d="M4.600 7.800l2 2 3.800-4"></path></svg><span class="tx" style="left: 41px; letter-spacing: -0.053px;">Complete</span></div><div class="c c3 gy"><i class="dot" style="left:25px"></i><span class="tx" style="left: 36.5px; letter-spacing: 0.097px;">Not Active</span></div><div class="c c4 gy"><i class="dot" style="left:24px"></i><span class="tx" style="left: 35.7px; letter-spacing: 0.097px;">Not Active</span></div><div class="c c5 gy"><i class="dot" style="left:24px"></i><span class="tx" style="left: 34.6px; letter-spacing: 0.097px;">Not Active</span></div><div class="c c6"><i class="d3"></i></div></div>
<div class="tr" style="top:369px"><i class="cb"></i><svg class="fi" viewBox="0 0 14 16" fill="none" stroke="#1f2330" stroke-width="1.7" stroke-linejoin="round" stroke-linecap="round"><path d="M2.600 1h5.600l4.800 4.800v7.600a1.600 1.600 0 0 1-1.600 1.600H2.600A1.600 1.600 0 0 1 1 13.400V2.600A1.600 1.600 0 0 1 2.600 1z"></path><path d="M8 1.200v4.800h4.800"></path></svg><span class="fn med" style="letter-spacing: 0.208px;">516.json</span><div class="c c1"><svg class="si" style="left:16.5px;top:11.5px;width:19px;height:19px" viewBox="0 0 19 19" fill="none" stroke="#c81a14" stroke-width="2" stroke-linecap="round"><circle cx="9.500" cy="9.500" r="8"></circle><path d="M9.500 5v5.400" stroke-width="2.200" stroke-linecap="butt"></path><circle cx="9.500" cy="13.300" r="1.200" fill="#c81a14" stroke="none"></circle></svg><span class="tx" style="left: 44px; letter-spacing: -0.13px;">Blocked</span></div><div class="c c2"><svg class="si" style="left:16.4px;top:13.3px;width:15px;height:15px" viewBox="0 0 15 15" fill="none" stroke="#3b4254" stroke-width="1.500" stroke-linejoin="round" stroke-linecap="round"><circle cx="7.500" cy="7.500" r="6.200"></circle><path d="M4.600 7.800l2 2 3.800-4"></path></svg><span class="tx" style="left: 41px; letter-spacing: -0.053px;">Complete</span></div><div class="c c3 gy"><i class="dot" style="left:25px"></i><span class="tx" style="left: 36.5px; letter-spacing: 0.097px;">Not Active</span></div><div class="c c4 gy"><i class="dot" style="left:24px"></i><span class="tx" style="left: 35.7px; letter-spacing: 0.097px;">Not Active</span></div><div class="c c5 gy"><i class="dot" style="left:24px"></i><span class="tx" style="left: 34.6px; letter-spacing: 0.097px;">Not Active</span></div><div class="c c6"><i class="d3"></i></div></div>
<div class="tr" style="top:410px"><i class="cb"></i><svg class="fi" viewBox="0 0 14 16" fill="none" stroke="#1f2330" stroke-width="1.7" stroke-linejoin="round" stroke-linecap="round"><path d="M2.600 1h5.600l4.800 4.800v7.600a1.600 1.600 0 0 1-1.600 1.600H2.600A1.600 1.600 0 0 1 1 13.400V2.600A1.600 1.600 0 0 1 2.600 1z"></path><path d="M8 1.200v4.800h4.800"></path></svg><span class="fn med" style="letter-spacing: 0.174px;">502Core-opswat.mft.rest.service.log</span><div class="c c1"><svg class="si" style="left:16.5px;top:11.5px;width:19px;height:19px" viewBox="0 0 19 19" fill="none" stroke="#c81a14" stroke-width="2" stroke-linecap="round"><circle cx="9.500" cy="9.500" r="8"></circle><path d="M9.500 5v5.400" stroke-width="2.200" stroke-linecap="butt"></path><circle cx="9.500" cy="13.300" r="1.200" fill="#c81a14" stroke="none"></circle></svg><span class="tx" style="left: 44px; letter-spacing: -0.13px;">Blocked</span></div><div class="c c2"><svg class="si" style="left:16.4px;top:13.3px;width:15px;height:15px" viewBox="0 0 15 15" fill="none" stroke="#3b4254" stroke-width="1.500" stroke-linejoin="round" stroke-linecap="round"><circle cx="7.500" cy="7.500" r="6.200"></circle><path d="M4.600 7.800l2 2 3.800-4"></path></svg><span class="tx" style="left: 41px; letter-spacing: -0.053px;">Complete</span></div><div class="c c3 gy"><i class="dot" style="left:25px"></i><span class="tx" style="left: 36.5px; letter-spacing: 0.097px;">Not Active</span></div><div class="c c4 gy"><i class="dot" style="left:24px"></i><span class="tx" style="left: 35.7px; letter-spacing: 0.097px;">Not Active</span></div><div class="c c5 gy"><i class="dot" style="left:24px"></i><span class="tx" style="left: 34.6px; letter-spacing: 0.097px;">Not Active</span></div><div class="c c6"><i class="d3"></i></div></div>
  </div>
  <!-- locked column dividers -->
  <div class="abs" style="left:774px;top:367px;width:1px;height:485px;background:#dfe0e6"></div>
  <div class="abs" id="rshadow" style="left:1793px;top:367px;width:8px;height:474px"></div>
  <div class="abs" style="left:1801px;top:367px;width:1px;height:485px;background:#dcdde4"></div>
  <svg class="abs" style="left:1824px;top:382px;width:16px;height:16px" viewBox="0 0 16 16" fill="none" stroke="#15171d" stroke-width="1.400" stroke-linejoin="round" stroke-linecap="round"><circle cx="8" cy="8" r="2.300"></circle><path d="M6.12 3.47L6.74 1.52L9.26 1.52L9.88 3.47L11.69 2.53L13.47 4.31L12.53 6.12L14.48 6.74L14.48 9.26L12.53 9.88L13.47 11.69L11.69 13.47L9.88 12.53L9.26 14.48L6.74 14.48L6.12 12.53L4.31 13.47L2.53 11.69L3.47 9.88L1.52 9.26L1.52 6.74L3.47 6.12L2.53 4.31L4.31 2.53z"></path><path d="M8.99 5.60L9.80 3.66M10.40 7.01L12.34 6.20M10.40 8.99L12.34 9.80M8.99 10.40L9.80 12.34M7.01 10.40L6.20 12.34M5.60 8.99L3.66 9.80M5.60 7.01L3.66 6.20M7.01 5.60L6.20 3.66" stroke-width="1.100"></path></svg>
  <!-- scrollbars -->
  <i class="tri up" style="left:1862.5px;top:418px"></i>
  <div class="abs thumb" style="left:1863px;top:426px;width:6px;height:264px"></div>
  <i class="tri dn" style="left:1862.5px;top:833.5px"></i>
  <i class="tri lf" style="left:286px;top:843.5px"></i><i class="tri rt" style="left:765px;top:843.5px"></i>
  <i class="tri lf" style="left:779px;top:843.5px"></i><div class="abs thumb" style="left:788px;top:844px;width:241px;height:6px"></div><i class="tri rt" style="left:1793px;top:843.5px"></i>
  <i class="tri lf" style="left:1805.5px;top:843.5px"></i><i class="tri rt" style="left:1863px;top:843.5px"></i>
  <!-- pagination -->
  <div class="abs pbox" style="left:282px;top:885px;width:62px;height:32px"><span class="t" style="left: 9px; top: 4px; letter-spacing: -0.139px;" id="t-25">25</span><i class="dd" style="left:35px;top:12px"></i></div>
  <span class="t" style="left: 354px; top: 890px; color: rgb(61, 70, 99); letter-spacing: -0.064px;" id="t-ipp">Items per page</span>
  <span class="t" style="left:453px;top:890px;color:#3d4663">|</span>
  <span class="t" style="left: 464px; top: 890px; color: rgb(61, 70, 99);" id="t-cnt">1-16 of 16 items</span>
  <div class="abs pbox" style="left:1676px;top:885px;width:196px;height:32px;border-radius:0">
    <div class="abs" style="left:30px;top:0;width:1px;height:30px;background:#c5cae0"></div>
    <div class="abs" style="left:163px;top:0;width:1px;height:30px;background:#c5cae0"></div>
    <svg class="abs" style="left:11px;top:9px;width:8px;height:12px" viewBox="0 0 8 12" fill="none" stroke="#c9cde0" stroke-width="1.300" stroke-linecap="round" stroke-linejoin="round"><path d="M6.400 1.200L1.600 6l4.800 4.800"></path></svg>
    <span class="t" style="left:39.5px;top:4px" id="t-pg1">1</span><i class="dd" style="left:57px;top:12px"></i>
    <span class="t" style="left: 88px; top: 4px; letter-spacing: -0.049px;" id="t-ofp">of 1 pages</span>
    <svg class="abs" style="left:175px;top:9px;width:8px;height:12px" viewBox="0 0 8 12" fill="none" stroke="#c9cde0" stroke-width="1.300" stroke-linecap="round" stroke-linejoin="round"><path d="M1.600 1.200L6.400 6l-4.800 4.800"></path></svg>
  </div>
</div>
</div>
<div id="topline"></div><div id="botline"></div>


</body></html>
